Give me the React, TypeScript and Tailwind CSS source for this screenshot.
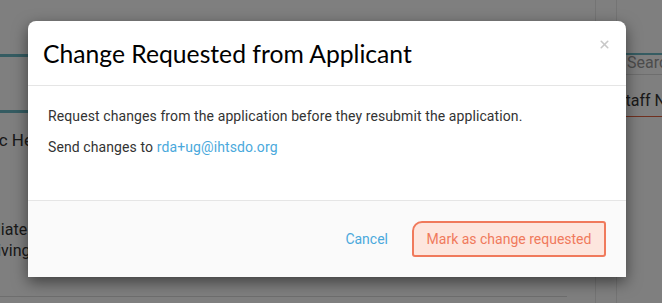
import { X } from "lucide-react";

export default function App() {
  return (
    <div className="relative h-[303px] w-[662px] overflow-hidden bg-white font-['Roboto',sans-serif] text-[14px] text-[#333]">
      {/* page behind the dialog */}
      <div className="flex h-full">
        <div className="flex-1 overflow-hidden whitespace-nowrap">
          <div className="mt-[54px] h-[3px] bg-[#6bb8c4]" />
          <div className="mt-[53px] h-[3px] bg-[#6bb8c4]" />
          <div className="-ml-[34px] mt-[17px] text-[17px] leading-[20px]">Basic Health</div>
          <div className="-ml-[63px] mt-[70px] text-[16px] leading-[20px]">Intermediate - 2 years</div>
          <div className="-ml-[38px] mt-[1px] text-[16px] leading-[20px]">Receiving updates</div>
          <div className="mr-[28px] mt-[35px] border-b border-[#ddd]" />
        </div>
        <div className="w-[21px] border-l border-[#e8e8e8]" />
        <div className="w-[46px] overflow-hidden whitespace-nowrap border-l border-[#e8e8e8]">
          <div className="mt-[53px] h-[2px] bg-[#6bb8c4]" />
          <div className="h-[20px] border-b border-[#ddd] pl-[10px] text-[16px] leading-[16px] text-[#999]">Search</div>
          <div className="mt-[16px] border-b border-[#e0603f] pb-[5px] text-[16px] leading-[20px]">
            <span className="-ml-[1px]">Staff Notes</span>
          </div>
        </div>
      </div>

      {/* backdrop */}
      <div className="absolute inset-0 bg-black/50" />

      {/* dialog */}
      <div className="absolute left-[28px] top-[21px] flex w-[598px] flex-col rounded-t-[8px] bg-white shadow-[0_5px_15px_rgba(0,0,0,0.5)]">
        <div className="flex h-[65px] items-start justify-between border-b border-[#e5e5e5] pl-[15px] pr-[15px]">
          <h4 className="mt-[18px] font-['Lato',sans-serif] text-[24.7px] leading-[30px] text-black">
            Change Requested from Applicant
          </h4>
          <button className="mt-[17px] text-[#c8c8c8]">
            <X size={13} strokeWidth={3} />
          </button>
        </div>
        <div className="h-[115px] border-b border-[#e5e5e5] px-[20px] pt-[20px] tracking-[0.1px]">
          <p className="mb-[10px] leading-[21px]">
            Request changes from the application before they resubmit the application.
          </p>
          <p className="leading-[21px]">
            Send changes to <a className="text-[#4aa9dc]">rda+ug@ihtsdo.org</a>
          </p>
        </div>
        <div className="flex h-[76px] items-center justify-end gap-[24px] bg-[#fafafa] px-[20px]">
          <button className="text-[14px] text-[#4aa9dc]">Cancel</button>
          <button className="h-[36px] w-[194px] rounded-[3px] rounded-tl-[10px] border-2 border-[#f07a5c] bg-[#fde6de] text-[14px] text-[#f07a5c]">
            Mark as change requested
          </button>
        </div>
      </div>
    </div>
  );
}
